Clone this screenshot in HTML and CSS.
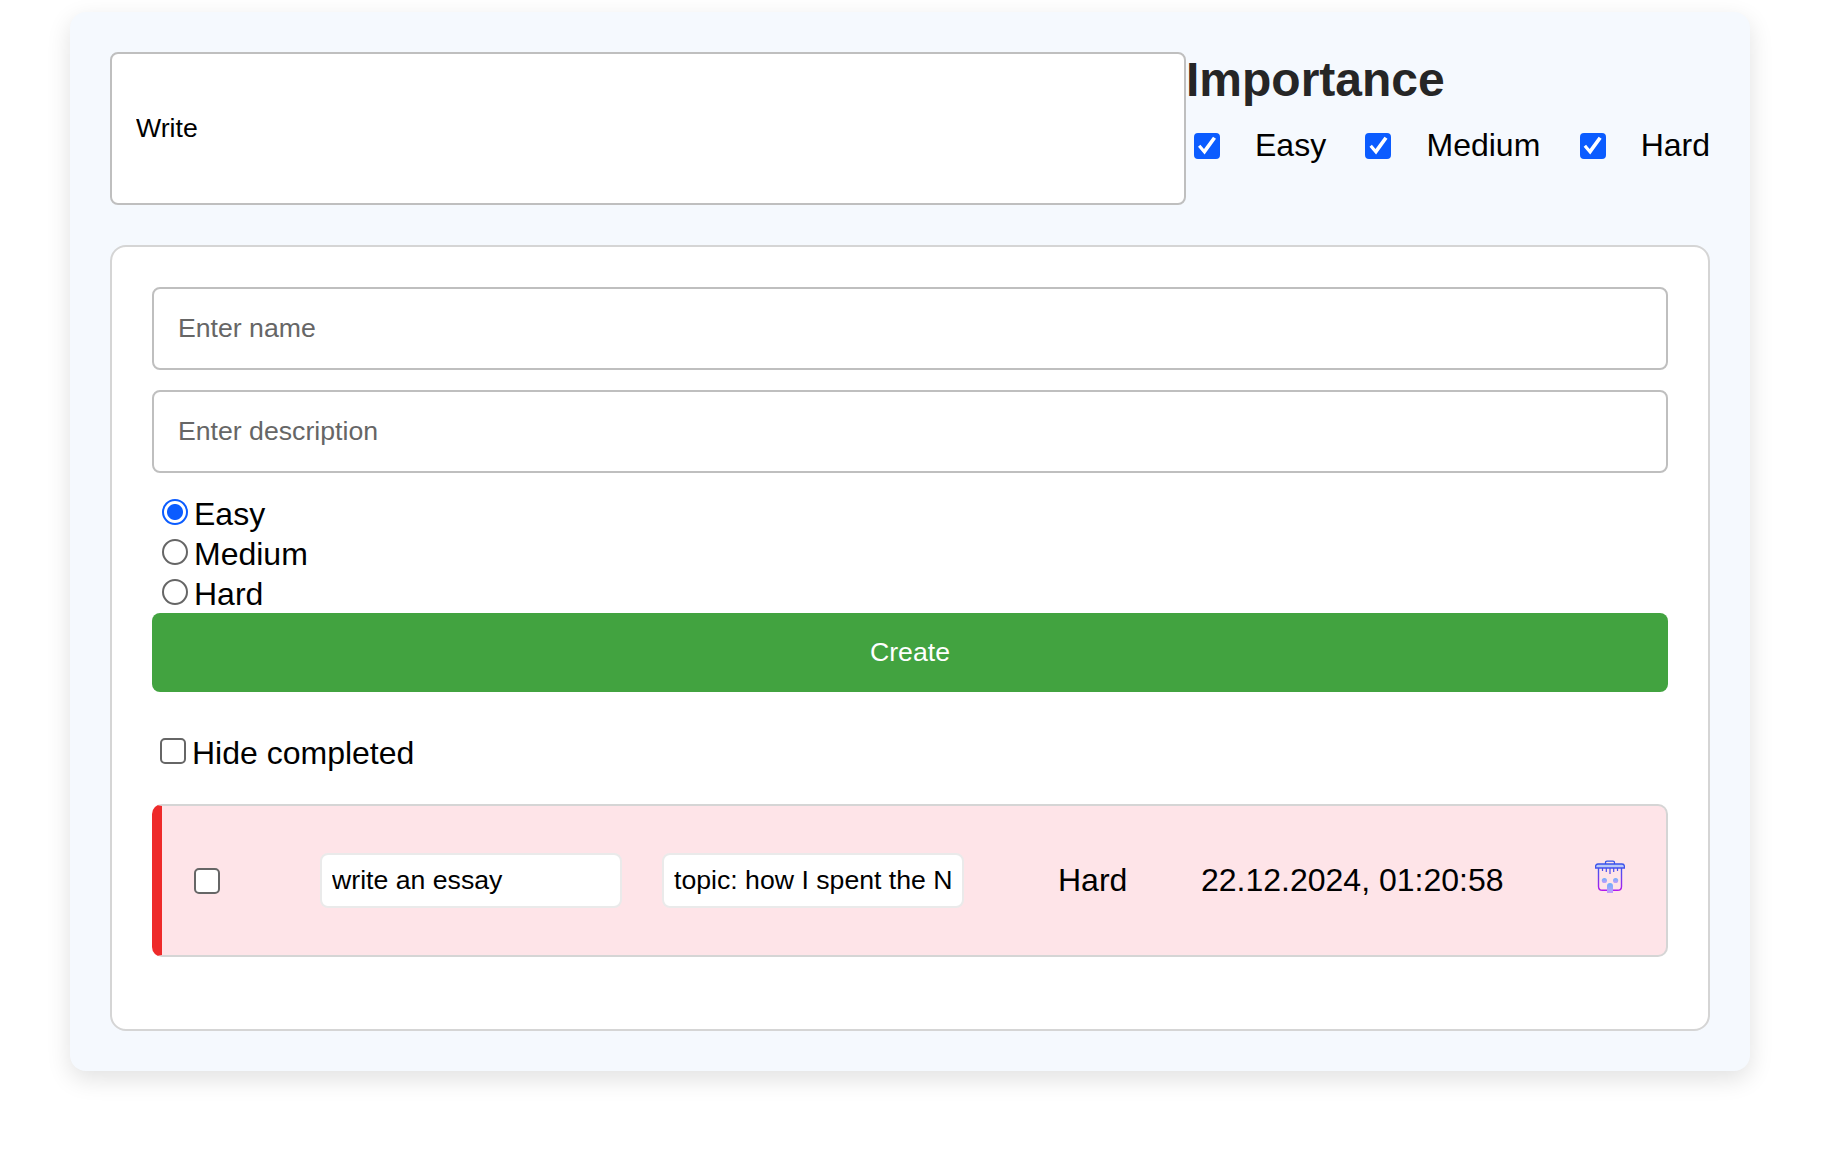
FILE: index.html
```html
<!DOCTYPE html>
<html lang="en">
<head>
<meta charset="utf-8">
<title>Tasks</title>
<link rel="stylesheet" href="styles.css">
</head>
<body>
<main class="container">
  <header class="filters">
    <input class="search" type="text" value="Write">
    <section class="importance">
      <h2 class="title">Importance</h2>
      <div class="options">
        <label class="option"><input class="check" type="checkbox" checked>Easy</label>
        <label class="option"><input class="check" type="checkbox" checked>Medium</label>
        <label class="option"><input class="check" type="checkbox" checked>Hard</label>
      </div>
    </section>
  </header>
  <section class="card">
    <form class="form">
      <input class="field" type="text" placeholder="Enter name">
      <input class="field" type="text" placeholder="Enter description">
      <div class="levels">
        <label class="level"><input class="radio" type="radio" name="level" checked>Easy</label>
        <label class="level"><input class="radio" type="radio" name="level">Medium</label>
        <label class="level"><input class="radio" type="radio" name="level">Hard</label>
      </div>
      <button class="create" type="button">Create</button>
    </form>
    <label class="hide"><input class="check" type="checkbox">Hide completed</label>
    <article class="task">
      <input class="check" type="checkbox">
      <input class="task-input task-name" type="text" value="write an essay">
      <input class="task-input task-topic" type="text" value="topic: how I spent the New Year">
      <span class="task-level">Hard</span>
      <time class="task-date">22.12.2024, 01:20:58</time>
      <svg class="trash" width="30" height="34" viewBox="0 0 30 34" fill="none">
        <defs>
          <linearGradient id="line" gradientUnits="userSpaceOnUse" x1="0" y1="0" x2="0" y2="31">
            <stop offset="0" stop-color="#2f55e8"/><stop offset=".35" stop-color="#4b4ff0"/><stop offset="1" stop-color="#b417ee"/>
          </linearGradient>
          <linearGradient id="soft" x1="0" y1="0" x2="0" y2="1">
            <stop offset="0" stop-color="#6cb0fb"/><stop offset="1" stop-color="#c59cfb"/>
          </linearGradient>
        </defs>
        <path d="M10.500 4V2.700Q10.500 1.200 12 1.200h6Q19.500 1.200 19.500 2.700V4" stroke="url(#line)" stroke-width="1.300"/>
        <path d="M3 4h24q2.400 0 2.400 2.400V8H.6V6.400Q.6 4 3 4Z" fill="#b9c9f6" stroke="url(#line)" stroke-width="1.300"/>
        <path d="M3.500 8v18.500Q3.500 30.300 7.300 30.300h15.400q3.800 0 3.800-3.800V8" stroke="url(#line)" stroke-width="1.400"/>
        <path d="M7.500 8v3M11.300 8v4M15 8v6M18.700 8v4M22.500 8v3" stroke="url(#line)" stroke-width="1.200"/>
        <circle cx="9.400" cy="20.500" r="2.600" fill="url(#soft)"/>
        <circle cx="20.600" cy="20.500" r="2.600" fill="url(#soft)"/>
        <path d="M12 33v-7a3 3 0 0 1 6 0v7Z" fill="url(#soft)"/>
      </svg>
    </article>
  </section>
</main>
</body>
</html>
```
FILE: styles.css
```css
* { box-sizing: border-box; }

html { background: #fff; }

body {
  min-height: 100vh;
  margin: 0;
  padding-top: 12px;
  background: #fff;
  color: #000;
  font: 32px/40px "Liberation Sans", Arial, sans-serif;
}

input, button { margin: 0; font: 26.667px/30px "Liberation Sans", Arial, sans-serif; }

.container {
  width: 1680px;
  height: 1059px;
  margin: 0 auto 0 70px;
  padding: 40px;
  display: flex;
  flex-direction: column;
  gap: 40px;
  background: #f5f9fe;
  border-radius: 16px;
  box-shadow: 0 8px 24px rgba(0, 0, 0, .12);
}

.filters { display: flex; height: 153px; }

.search, .field {
  width: 100%;
  padding: 24px;
  color: #000;
  background: #fff;
  border: 2px solid #bfbfbf;
  border-radius: 8px;
}

.search { flex: 1; min-width: 0; padding-bottom: 26px; }
.importance { width: 524px; }

.title {
  margin: 0;
  color: #262626;
  font-size: 48px;
  line-height: 55px;
}

.options {
  display: flex;
  justify-content: space-between;
  margin-top: 18px;
  padding-left: 8px;
}

.option { display: flex; align-items: center; gap: 35px; }
.option .check { margin-top: 2px; }

.check, .radio {
  appearance: none;
  flex: none;
  width: 26px;
  height: 26px;
  background: #fff;
  border: 2px solid #666;
  border-radius: 5px;
}

.check:checked {
  display: grid;
  place-items: center;
  background: #0b5cff;
  border-color: #0b5cff;
  border-radius: 4px;
}

.check:checked::after {
  content: "";
  width: 20px;
  height: 20px;
  background: #fff;
  clip-path: polygon(5% 54%, 17% 44%, 35% 65%, 80% 4%, 95% 14%, 38% 92%);
}

.radio { border-radius: 50%; }

.radio:checked {
  border-color: #0b5cff;
  background: radial-gradient(circle, #0b5cff 7.500px, #fff 8.500px);
}

.card {
  height: 786px;
  padding: 40px;
  display: flex;
  flex-direction: column;
  background: #fff;
  border: 2px solid #d5d5d5;
  border-radius: 16px;
}

.form { display: flex; flex-direction: column; }
.field { height: 83px; margin-bottom: 20px; }
.field::placeholder { color: #666; opacity: 1; }

.level {
  display: flex;
  gap: 6px;
  height: 40px;
  padding-left: 10px;
  line-height: 42px;
}

.level .radio { margin-top: 6px; }

.create {
  height: 79px;
  padding-bottom: 3px;
  color: #fff;
  background: #42a340;
  border: 0;
  border-radius: 8px;
}

.hide {
  display: flex;
  gap: 6px;
  height: 40px;
  margin: 40px 0 32px;
  padding-left: 8px;
  line-height: 42px;
}

.hide .check { margin-top: 6px; }

.task {
  height: 153px;
  display: flex;
  align-items: center;
  padding-left: 32px;
  background: #fee4e8;
  border: 2px solid #d5d5d5;
  border-left: 10px solid #ee2a2a;
  border-radius: 10px;
}

.task-input {
  width: 302px;
  height: 55px;
  padding: 10px;
  color: #000;
  background: #fff;
  border: 2px solid #eaeaea;
  border-radius: 8px;
}

.task-name { margin-left: 100px; }
.task-topic { margin-left: 40px; }
.task-level { width: 69px; margin: 0 0 2px 94px; }
.task-date { width: 303px; margin: 0 0 2px 74px; white-space: nowrap; }
.trash { margin: 0 0 8px 91px; }
```
